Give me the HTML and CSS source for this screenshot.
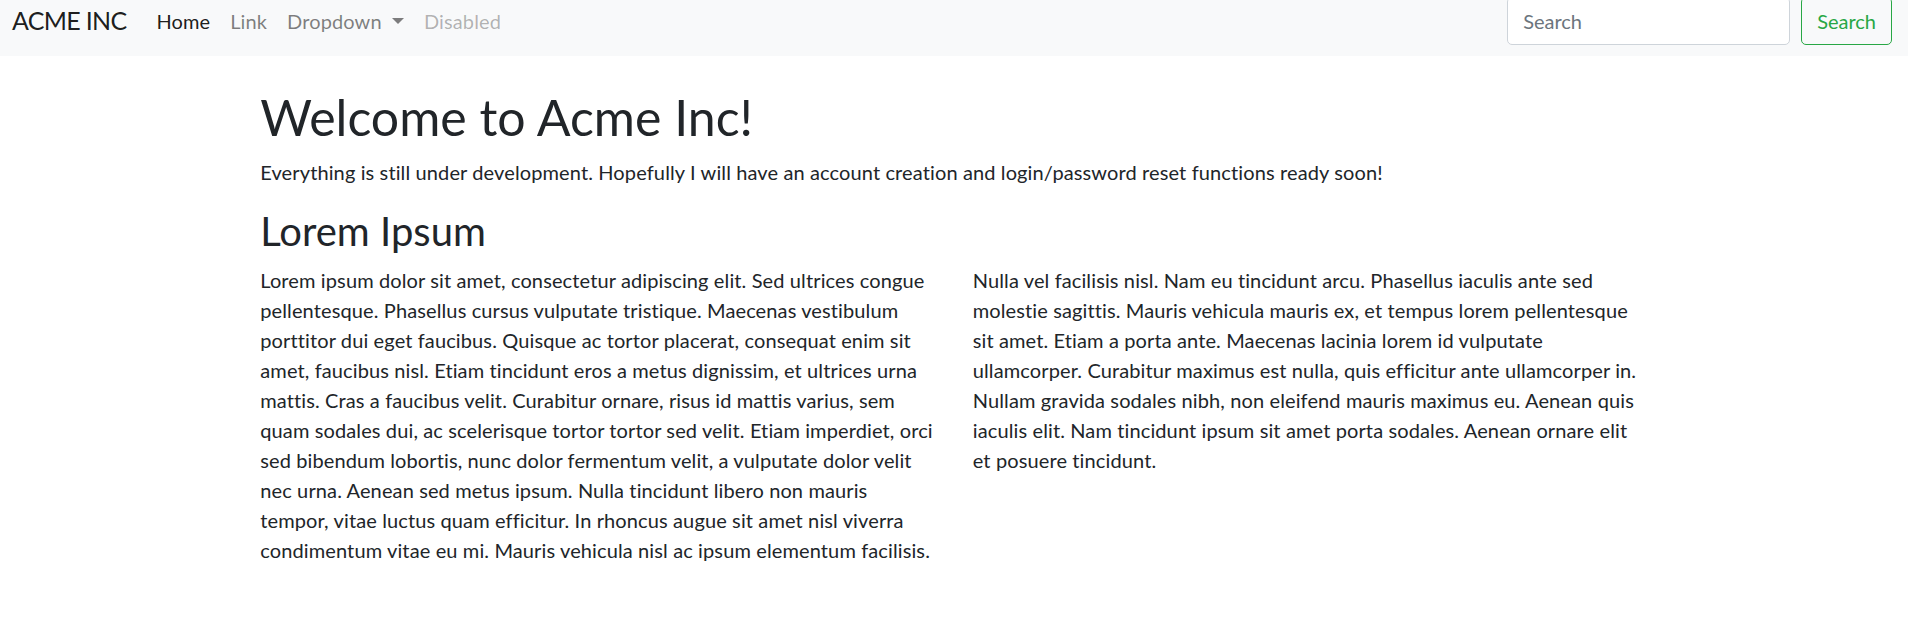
FILE: index.html
```html
<!DOCTYPE html>
<html lang="en">
<head>
<meta charset="utf-8">
<title>Acme Inc</title>
<link rel="stylesheet" href="styles.css">
</head>
<body>
<nav class="navbar">
  <a class="brand" href="#">ACME INC</a>
  <ul class="nav">
    <li><a class="nav-link active" href="#">Home</a></li>
    <li><a class="nav-link" href="#">Link</a></li>
    <li><a class="nav-link dropdown-toggle" href="#">Dropdown </a></li>
    <li><a class="nav-link disabled" href="#">Disabled</a></li>
  </ul>
  <form class="search">
    <input class="search-input" type="text" placeholder="Search">
    <button class="search-btn" type="button">Search</button>
  </form>
</nav>
<main class="container">
  <h1 class="title">Welcome to Acme Inc!</h1>
  <p class="intro">Everything is still under development. Hopefully I will have an account creation and login/password reset functions ready soon!</p>
  <h2 class="subtitle">Lorem Ipsum</h2>
  <div class="row">
    <div class="col">
      <p>Lorem ipsum dolor sit amet, consectetur adipiscing elit. Sed ultrices congue pellentesque. Phasellus cursus vulputate tristique. Maecenas vestibulum porttitor dui eget faucibus. Quisque ac tortor placerat, consequat enim sit amet, faucibus nisl. Etiam tincidunt eros a metus dignissim, et ultrices urna mattis. Cras a faucibus velit. Curabitur ornare, risus id mattis varius, sem quam sodales dui, ac scelerisque tortor tortor sed velit. Etiam imperdiet, orci sed bibendum lobortis, nunc dolor fermentum velit, a vulputate dolor velit nec urna. Aenean sed metus ipsum. Nulla tincidunt libero non mauris tempor, vitae luctus quam efficitur. In rhoncus augue sit amet nisl viverra condimentum vitae eu mi. Mauris vehicula nisl ac ipsum elementum facilisis.</p>
    </div>
    <div class="col">
      <p>Nulla vel facilisis nisl. Nam eu tincidunt arcu. Phasellus iaculis ante sed molestie sagittis. Mauris vehicula mauris ex, et tempus lorem pellentesque sit amet. Etiam a porta ante. Maecenas lacinia lorem id vulputate ullamcorper. Curabitur maximus est nulla, quis efficitur ante ullamcorper in. Nullam gravida sodales nibh, non eleifend mauris maximus eu. Aenean quis iaculis elit. Nam tincidunt ipsum sit amet porta sodales. Aenean ornare elit et posuere tincidunt.</p>
    </div>
  </div>
</main>
</body>
</html>
```
FILE: styles.css
```css
* { box-sizing: border-box; }

html, body {
  margin: 0;
  padding: 0;
  background: #fff;
}

body {
  font-family: Lato, "Open Sans", "Liberation Sans", sans-serif;
  font-size: 20px;
  line-height: 30px;
  letter-spacing: 0.12px;
  color: #212529;
  overflow: hidden;
}

.navbar {
  display: flex;
  align-items: center;
  height: 70px;
  margin-top: -14px;
  padding: 10px 16px 10px 12px;
  background: #f8f9fa;
}

.brand {
  font-size: 25px;
  line-height: 37.5px;
  letter-spacing: -0.7px;
  padding: 6px 0;
  margin-right: 20px;
  color: rgba(0, 0, 0, 0.9);
  text-decoration: none;
  white-space: nowrap;
}

.nav {
  display: flex;
  list-style: none;
  margin: 0;
  padding: 0;
  flex: 1;
}

.nav-link {
  display: block;
  padding: 10px;
  color: rgba(0, 0, 0, 0.5);
  text-decoration: none;
  white-space: nowrap;
}

.nav-link.active { color: rgba(0, 0, 0, 0.9); }
.nav-link.disabled { color: rgba(0, 0, 0, 0.3); }

.dropdown-toggle::after {
  content: "";
  display: inline-block;
  margin-left: 5px;
  vertical-align: 5px;
  border-top: 6px solid;
  border-right: 6px solid transparent;
  border-left: 6px solid transparent;
  border-bottom: 0;
}

.search {
  display: flex;
  align-items: center;
  gap: 11px;
}

.search-input {
  width: 283px;
  height: 47.5px;
  padding: 7.5px 15px;
  font: inherit;
  color: #495057;
  background: #fff;
  border: 1px solid #ced4da;
  border-radius: 5px;
  outline: none;
}

.search-input::placeholder { color: #6c757d; }

.search-btn {
  height: 47.5px;
  padding: 7.5px 15px;
  font: inherit;
  color: #28a745;
  background: transparent;
  border: 1px solid #28a745;
  border-radius: 5px;
}

/* Main content */
.container {
  max-width: 1425px;
  margin: 0 auto;
  padding: 30.6px 18.75px 0;
}

.title {
  margin: 0 0 10px;
  font-size: 50px;
  line-height: 60px;
  font-weight: 400;
  letter-spacing: 0;
}

.intro {
  margin: 0 0 20px;
}

.subtitle {
  margin: 0 0 10px;
  font-size: 40px;
  line-height: 48px;
  font-weight: 400;
  letter-spacing: 0;
}

.row {
  display: flex;
  margin: 0 -18.75px;
}

.col {
  flex: 0 0 50%;
  max-width: 50%;
  padding: 0 18.75px;
}

.col p { margin: 0 0 20px; }
```
